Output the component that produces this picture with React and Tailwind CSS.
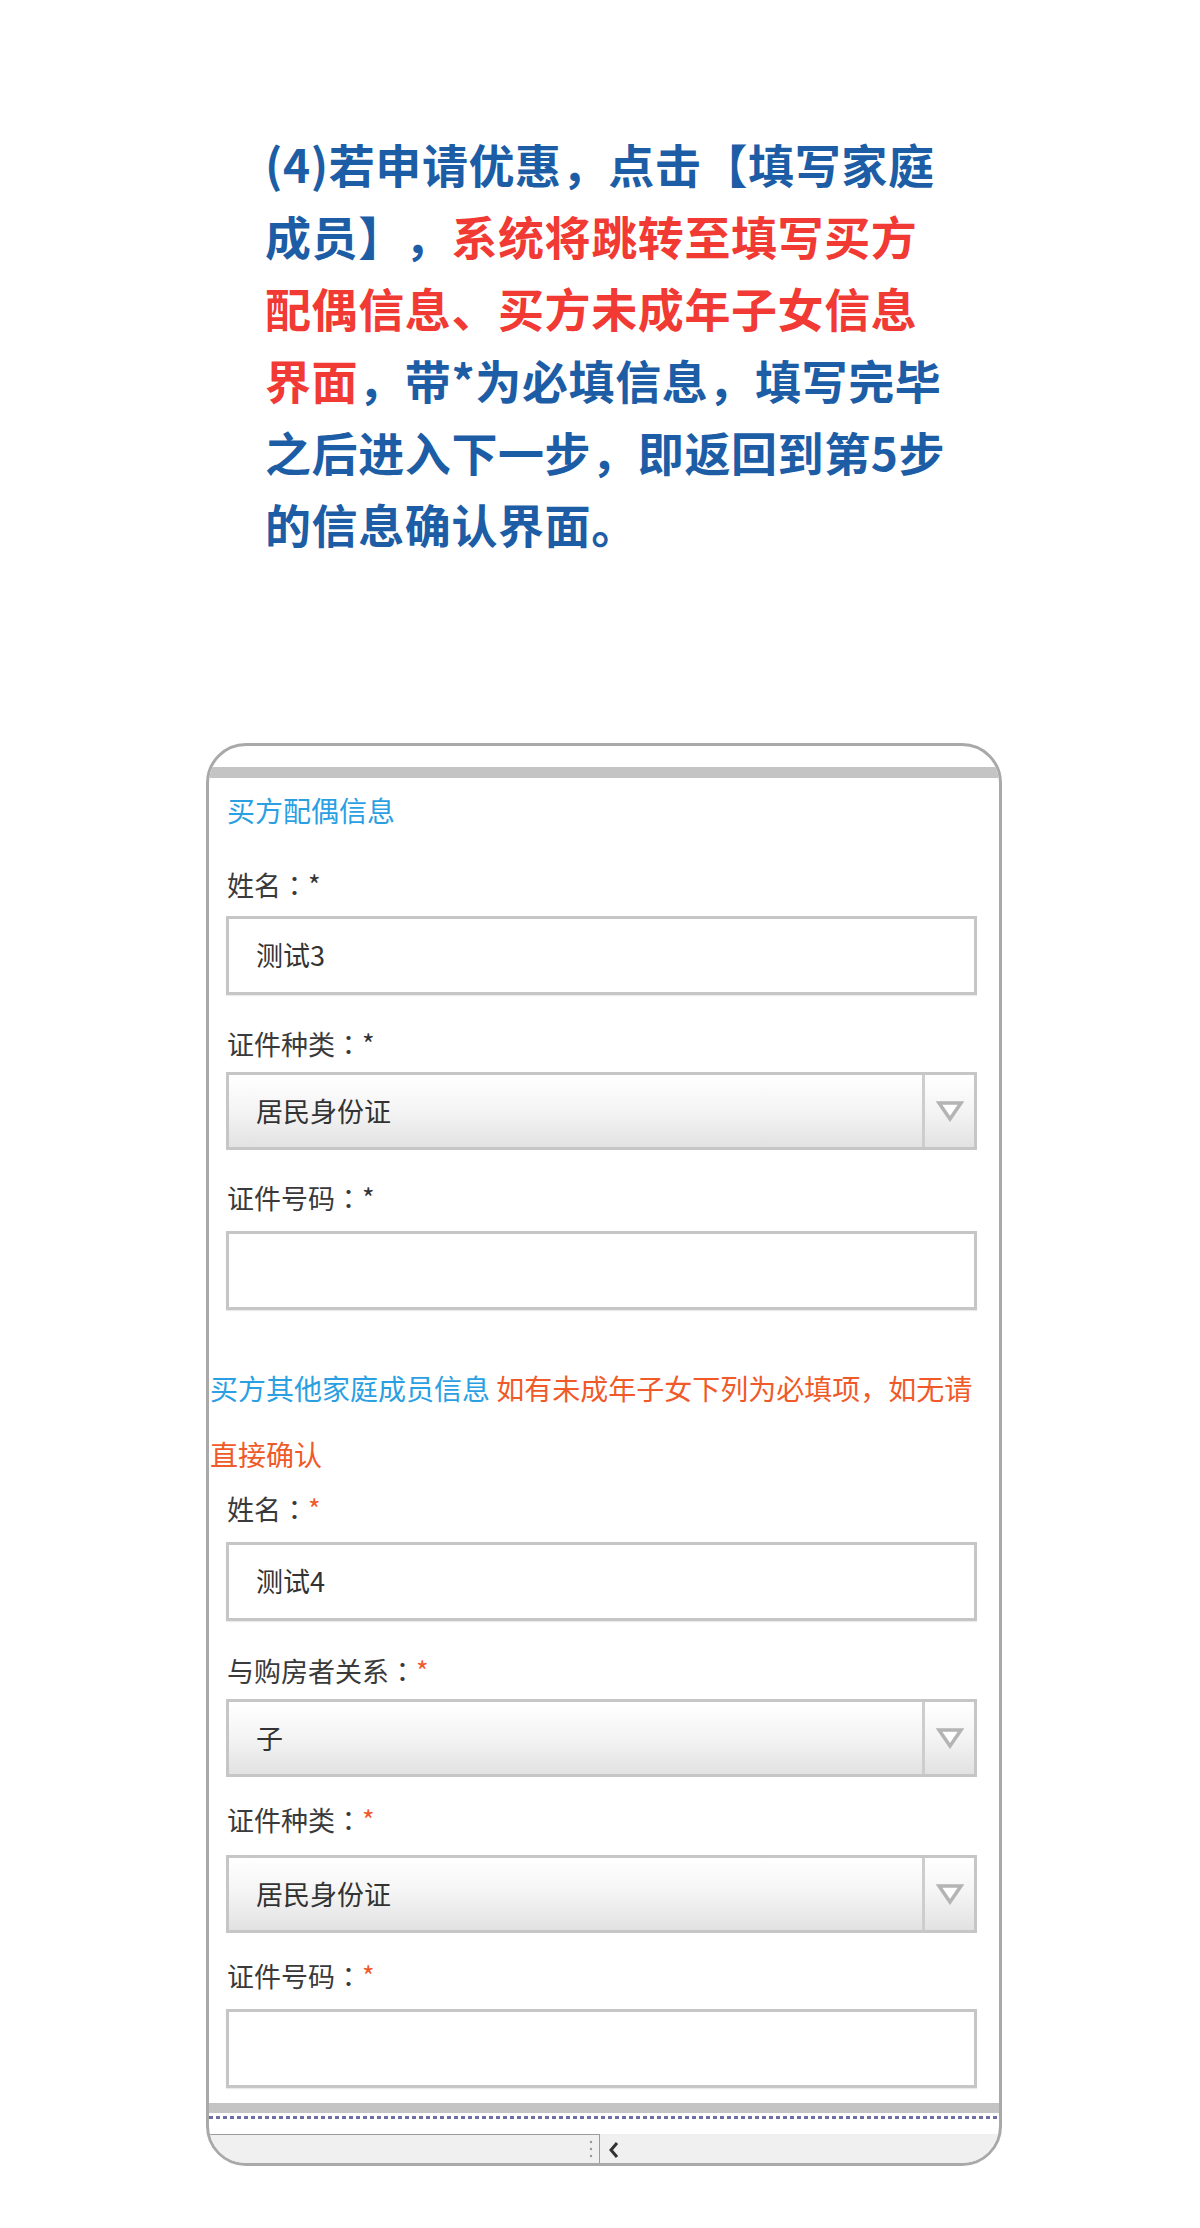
// App.jsx - 填写家庭成员 step guide with form screenshot
const cjk = { fontFamily: '"Noto Sans CJK SC", "Noto Sans", sans-serif' };
const tc = { fontFamily: '"Noto Sans CJK TC", sans-serif' };

const Label = ({ text, red = false, className = '' }) => (
  <div className={`pl-[18px] h-[40px] leading-[40px] text-[27px] text-[#3a3a3a] ${className}`}>
    {text}
    <span style={tc}>：</span>
    <span className={red ? 'text-[#f05a28]' : 'text-[#333]'}>*</span>
  </div>
);

const Input = ({ value = '', className = '' }) => (
  <div
    className={`ml-[17px] w-[751px] h-[79px] border-[3px] border-[#c6c6c6] bg-white flex items-center pl-[27px] text-[27px] text-[#333] shadow-[0_1px_1px_rgba(0,0,0,0.08)] ${className}`}
  >
    {value}
  </div>
);

const Select = ({ value, className = '' }) => (
  <div
    className={`ml-[17px] w-[751px] h-[78px] border-[3px] border-[#c6c6c6] flex bg-gradient-to-b from-white via-[#f4f4f4] to-[#e2e2e2] ${className}`}
  >
    <div className="flex-1 flex items-center pl-[27px] text-[27px] text-[#333]">{value}</div>
    <div className="w-[52px] border-l-[3px] border-[#cdcdcd] flex items-center justify-center">
      <svg width="28" height="22" viewBox="0 0 28 22">
        <path d="M3 3 H25 L14 19 Z" fill="#fff" stroke="#b4b4b4" strokeWidth="3.5" strokeLinejoin="miter" />
      </svg>
    </div>
  </div>
);

export default function App() {
  const blue = 'text-[#1c5da5]';
  const red = 'text-[#f13a33]';
  return (
    <div className="w-[1200px] h-[2228px] bg-white overflow-hidden" style={cjk}>
      <div
        className={`pt-[127px] pl-[265px] text-[46px] leading-[72px] font-bold tracking-[0.6px] [text-spacing-trim:space-all] ${blue}`}
      >
        <div>(4)若申请优惠，点击【填写家庭</div>
        <div>
          成员】，<span className={red}>系统将跳转至填写买方</span>
        </div>
        <div className={red}>配偶信息、买方未成年子女信息</div>
        <div>
          <span className={red}>界面</span>，带*为必填信息，填写完毕
        </div>
        <div>之后进入下一步，即返回到第5步</div>
        <div>的信息确认界面。</div>
      </div>

      <div className="mt-[184px] ml-[206px] w-[796px] h-[1423px] border-[3px] border-[#a9a9a9] rounded-[40px] overflow-hidden flex flex-col [text-spacing-trim:space-all]">
        <div className="h-[21px] shrink-0" />
        <div className="h-[11px] bg-[#c4c4c4] shrink-0" />

        <div className="mt-[12px] pl-[18px] h-[40px] leading-[40px] text-[28px] text-[#2a9fe2]">买方配偶信息</div>

        <Label text="姓名" className="mt-[35px]" />
        <Input value="测试3" className="mt-[11px]" />

        <Label text="证件种类" className="mt-[29px]" />
        <Select value="居民身份证" className="mt-[8px]" />

        <Label text="证件号码" className="mt-[28px]" />
        <Input className="mt-[13px]" />

        <div className="mt-[58px] pl-[1px] text-[28px] leading-[40px]">
          <div>
            <span className="text-[#2a9fe2]">买方其他家庭成员信息</span>{' '}
            <span className="text-[#f05a28]">如有未成年子女下列为必填项，如无请</span>
          </div>
          <div className="mt-[26px] text-[#f05a28]">直接确认</div>
        </div>

        <Label text="姓名" red className="mt-[15px]" />
        <Input value="测试4" className="mt-[13px]" />

        <Label text="与购房者关系" red className="mt-[30px]" />
        <Select value="子" className="mt-[8px]" />

        <Label text="证件种类" red className="mt-[23px]" />
        <Select value="居民身份证" className="mt-[15px]" />

        <Label text="证件号码" red className="mt-[23px]" />
        <Input className="mt-[13px]" />

        <div className="mt-[15px] h-[10px] bg-[#c4c4c4] shrink-0" />
        <div className="mt-[3px] h-[3px] shrink-0 bg-[repeating-linear-gradient(90deg,#6e6ea6_0_4px,transparent_4px_7px)]" />
        <div className="mt-[15px] flex-1 flex bg-[#f0f0f0]">
          <div className="w-[391px] border-t border-r border-[#9c9c9c] flex items-center justify-end pr-[6px]">
            <svg width="4" height="20" viewBox="0 0 4 20">
              <circle cx="2" cy="3" r="1.2" fill="#999" />
              <circle cx="2" cy="10" r="1.2" fill="#999" />
              <circle cx="2" cy="17" r="1.2" fill="#999" />
            </svg>
          </div>
          <div className="flex items-center pl-[8px] pt-[2px]">
            <svg width="12" height="18" viewBox="0 0 12 18">
              <path d="M9 2 L3 9 L9 16" fill="none" stroke="#333" strokeWidth="3" />
            </svg>
          </div>
        </div>
      </div>
    </div>
  );
}
